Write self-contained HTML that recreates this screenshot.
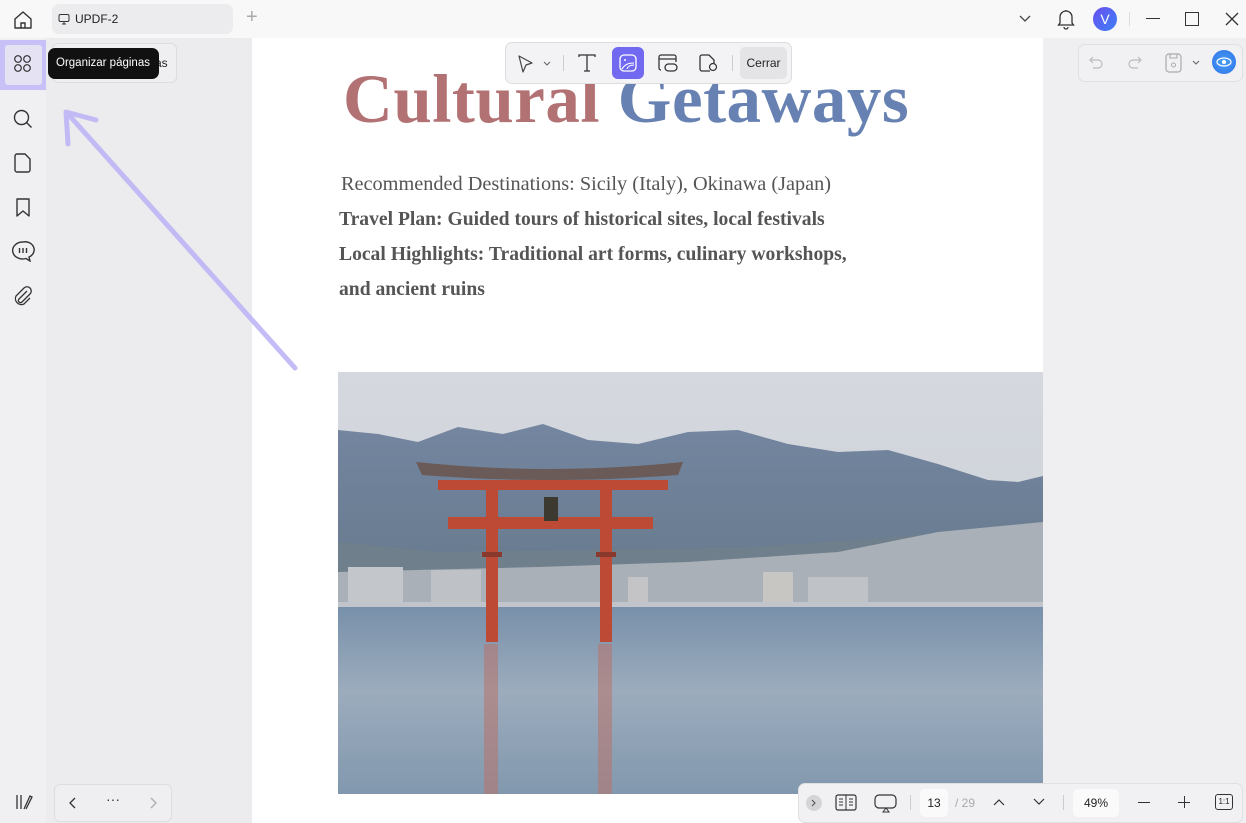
<!DOCTYPE html>
<html><head><meta charset="utf-8"><style>
*{margin:0;padding:0;box-sizing:border-box}
body{width:1246px;height:823px;overflow:hidden;background:#efeff1;font-family:"Liberation Sans",sans-serif;position:relative}
.abs{position:absolute}
svg{display:block}
</style></head><body>
<!-- top bar -->
<div class="abs" style="left:0;top:0;width:1246px;height:38px;background:#f8f8f9"></div>
<div class="abs" style="left:52px;top:4px;width:181px;height:30px;background:#ececee;border-radius:7px"></div>
<svg class="abs" style="left:58px;top:13px" width="12" height="12" viewBox="0 0 12 12"><rect x="1" y="1.5" width="10" height="7" rx="1.5" fill="none" stroke="#333" stroke-width="1"/><path d="M4 11h4M6 8.5v2.5" stroke="#333"/></svg>
<div class="abs" style="left:75px;top:12px;font-size:12px;color:#222">UPDF-2</div>
<div class="abs" style="left:246px;top:6px;font-size:20px;color:#aaa;font-weight:300">+</div>
<svg class="abs" style="left:12px;top:9px" width="22" height="22" viewBox="0 0 22 22"><path d="M3 10L11 3l8 7v9H3z" fill="none" stroke="#333" stroke-width="1.4" stroke-linejoin="round"/><path d="M9 19v-5h4v5" fill="none" stroke="#333" stroke-width="1.4"/></svg>
<svg class="abs" style="left:1018px;top:14px" width="14" height="10"><path d="M2 2l5 5 5-5" fill="none" stroke="#444" stroke-width="1.3"/></svg>
<svg class="abs" style="left:1056px;top:8px" width="20" height="22" viewBox="0 0 20 22"><path d="M4 15V9a6 6 0 0 1 12 0v6l1.5 2h-15z M10 2v1 M8 19a2 2 0 0 0 4 0" fill="none" stroke="#333" stroke-width="1.3"/></svg>
<div class="abs" style="left:1093px;top:7px;width:24px;height:24px;border-radius:50%;background:linear-gradient(135deg,#6a4df0,#3b82f6);color:#fff;font-size:14px;text-align:center;line-height:24px">V</div>
<div class="abs" style="left:1129px;top:12px;width:1px;height:14px;background:#ddd"></div>
<div class="abs" style="left:1146px;top:18px;width:14px;height:1.3px;background:#333"></div>
<div class="abs" style="left:1185px;top:12px;width:14px;height:14px;border:1.3px solid #333"></div>
<svg class="abs" style="left:1224px;top:11px" width="16" height="16"><path d="M2 2l12 12M14 2L2 14" stroke="#333" stroke-width="1.3"/></svg>

<!-- left rail -->
<div class="abs" style="left:0;top:38px;width:46px;height:785px;background:#f0f0f2"></div>
<div class="abs" style="left:0;top:40px;width:47px;height:50px;background:#c7c1f7"></div>
<div class="abs" style="left:5px;top:45px;width:37px;height:40px;background:#e4e2f3;border-radius:3px"></div>
<svg class="abs" style="left:13px;top:54px" width="20" height="20" viewBox="0 0 20 20"><g fill="none" stroke="#333" stroke-width="1.2"><circle cx="5" cy="5" r="3.3"/><circle cx="14" cy="5" r="3.3"/><circle cx="5" cy="14" r="3.3"/><circle cx="14" cy="14" r="3.3"/></g></svg>
<svg class="abs" style="left:12px;top:108px" width="22" height="22" viewBox="0 0 22 22"><circle cx="9.5" cy="9.5" r="7" fill="none" stroke="#333" stroke-width="1.4"/><path d="M14.5 14.5l5 5" stroke="#333" stroke-width="1.4"/></svg>
<svg class="abs" style="left:13px;top:152px" width="20" height="22" viewBox="0 0 20 22"><path d="M4 2h8l5 5v11a2 2 0 0 1-2 2H4a2 2 0 0 1-2-2V4a2 2 0 0 1 2-2z" fill="none" stroke="#333" stroke-width="1.4"/></svg>
<svg class="abs" style="left:14px;top:197px" width="18" height="22" viewBox="0 0 18 22"><path d="M3 2h12v17l-6-5-6 5z" fill="none" stroke="#333" stroke-width="1.4" stroke-linejoin="round"/></svg>
<svg class="abs" style="left:11px;top:240px" width="24" height="22" viewBox="0 0 24 22"><path d="M12 2a10 8.5 0 1 0 3 16.5l4 2.5-1-4A9 8 0 0 0 12 2z" fill="none" stroke="#333" stroke-width="1.4"/><path d="M8.5 8v5M12 8v5M15.5 8v5" stroke="#333" stroke-width="1.4"/></svg>
<svg class="abs" style="left:13px;top:285px" width="20" height="22" viewBox="0 0 20 22"><path d="M14 6l-8 8a2 2 0 0 0 3 3l8-8a4 4 0 0 0-6-6l-8 8a6 6 0 0 0 8 8l6-6" fill="none" stroke="#333" stroke-width="1.3"/></svg>
<svg class="abs" style="left:14px;top:792px" width="20" height="20" viewBox="0 0 20 20"><path d="M3 3v14M7 3v14M10 17l6-13 2 1-6 12" fill="none" stroke="#333" stroke-width="1.3"/></svg>

<!-- panel -->
<div class="abs" style="left:46px;top:38px;width:206px;height:785px;background:#ececee"></div>
<div class="abs" style="left:52px;top:43px;width:125px;height:40px;border:1px solid #ddd;border-radius:6px;background:#efeff1"></div>
<div class="abs" style="left:155px;top:56px;font-size:12px;color:#222">as</div>
<div class="abs" style="left:48px;top:48px;width:111px;height:31px;background:#111;border-radius:7px;color:#fff;font-size:11.5px;line-height:31px;padding-left:8px;white-space:nowrap">Organizar páginas</div>
<div class="abs" style="left:54px;top:784px;width:118px;height:38px;border:1px solid #ddd;border-radius:6px;background:#efeff1"></div>
<svg class="abs" style="left:66px;top:796px" width="14" height="14"><path d="M9 2L4 7l5 5" fill="none" stroke="#333" stroke-width="1.3"/></svg>
<div class="abs" style="left:106px;top:791px;font-size:14px;color:#333">···</div>
<svg class="abs" style="left:146px;top:796px" width="14" height="14"><path d="M5 2l5 5-5 5" fill="none" stroke="#aaa" stroke-width="1.3"/></svg>

<!-- page -->
<div class="abs" style="left:252px;top:38px;width:791px;height:785px;background:#fff"></div>
<div class="abs" style="left:343px;top:60px;font-family:'Liberation Serif',serif;font-weight:bold;font-size:69px;letter-spacing:0.5px;white-space:nowrap"><span style="color:#b27172">Cultural</span> <span style="color:#6782b2">Getaways</span></div>
<div class="abs" style="left:341px;top:173px;font-family:'Liberation Serif',serif;font-size:20.3px;color:#555;white-space:nowrap">Recommended Destinations: Sicily (Italy), Okinawa (Japan)</div>
<div class="abs" style="left:339px;top:202px;font-family:'Liberation Serif',serif;font-size:19.6px;font-weight:bold;color:#555;line-height:35px;white-space:nowrap">Travel Plan: Guided tours of historical sites, local festivals<br>Local Highlights: Traditional art forms, culinary workshops,<br>and ancient ruins</div>

<!-- photo -->
<svg class="abs" style="left:338px;top:372px" width="705" height="422" viewBox="0 0 705 422">
<defs>
<linearGradient id="sky" x1="0" y1="0" x2="0" y2="1"><stop offset="0" stop-color="#d5d8de"/><stop offset="1" stop-color="#c5ccd6"/></linearGradient>
<linearGradient id="mt" x1="0" y1="0" x2="0" y2="1"><stop offset="0" stop-color="#7486a0"/><stop offset="1" stop-color="#66788a"/></linearGradient>
<linearGradient id="wt" x1="0" y1="0" x2="0" y2="1"><stop offset="0" stop-color="#7890aa"/><stop offset="0.45" stop-color="#9cacbd"/><stop offset="1" stop-color="#8298ae"/></linearGradient>
</defs>
<rect width="705" height="422" fill="url(#sky)"/>
<path d="M0 58 L40 62 L80 70 L120 55 L165 62 L205 52 L250 68 L300 72 L350 60 L400 58 L450 72 L500 80 L550 78 L600 92 L650 108 L680 110 L705 104 L705 235 L0 235z" fill="url(#mt)"/>
<path d="M0 170 L100 180 L250 178 L400 176 L520 168 L620 160 L705 155 L705 235 L0 235z" fill="#6f7f8b"/>
<path d="M0 200 L200 195 L350 190 L500 180 L600 160 L705 150 L705 232 L0 232z" fill="#a9b0b8"/>
<rect x="10" y="195" width="55" height="38" fill="#c3c6ca"/>
<rect x="93" y="198" width="50" height="35" fill="#bec1c6"/>
<rect x="425" y="200" width="30" height="33" fill="#c8c6c2"/>
<rect x="290" y="205" width="20" height="28" fill="#c4c4c6"/>
<rect x="470" y="205" width="60" height="28" fill="#bfc3c8"/>
<rect x="0" y="230" width="705" height="5" fill="#c1c5cb"/>
<rect x="0" y="235" width="705" height="187" fill="url(#wt)"/>
<g fill="#bd4a34">
<path d="M78 90 Q210 104 345 90 L340 103 Q210 113 84 103z" fill="#6a5a58"/>
<rect x="100" y="108" width="230" height="10"/>
<rect x="110" y="145" width="205" height="12"/>
<rect x="148" y="118" width="12" height="152"/>
<rect x="262" y="118" width="12" height="152"/>
<rect x="144" y="180" width="20" height="5" fill="#8a3a2c"/>
<rect x="258" y="180" width="20" height="5" fill="#8a3a2c"/>
<rect x="206" y="125" width="14" height="24" fill="#3c3a30"/>
</g>
<g fill="#b8736a" opacity="0.55"><rect x="146" y="272" width="14" height="150"/><rect x="260" y="272" width="14" height="150"/></g>
</svg>

<!-- arrow -->
<svg class="abs" style="left:50px;top:100px" width="260" height="280"><g stroke="#bdb5f5" stroke-width="5" fill="none" stroke-linecap="round" opacity="0.9"><path d="M245 268 L18 14"/><path d="M16 12 L18 44 M16 12 L46 20"/></g></svg>

<!-- floating toolbar -->
<div class="abs" style="left:505px;top:42px;width:287px;height:42px;background:#f3f3f5;border:1px solid #ddd;border-radius:7px"></div>
<svg class="abs" style="left:516px;top:54px" width="40" height="20"><path d="M3 2l13 7-6 2-3 7z" fill="none" stroke="#444" stroke-width="1.2" stroke-linejoin="round"/><path d="M28 8l3 3 3-3" fill="none" stroke="#666" stroke-width="1.1"/></svg>
<div class="abs" style="left:563px;top:55px;width:1px;height:16px;background:#ccc"></div>
<svg class="abs" style="left:577px;top:53px" width="20" height="20"><path d="M2 4V2h16v2M10 2v16M7 18h6" fill="none" stroke="#333" stroke-width="1.3"/></svg>
<div class="abs" style="left:612px;top:47px;width:32px;height:32px;background:#7169f0;border-radius:6px"></div>
<svg class="abs" style="left:619px;top:54px" width="18" height="18"><rect x="1" y="1" width="16" height="16" rx="4" fill="none" stroke="#fff" stroke-width="1.3"/><path d="M3 15c3-5 7-6 12-6M8 15c1-3 3-4 7-4" fill="none" stroke="#fff" stroke-width="1.1"/><circle cx="6" cy="6" r="1" fill="#fff"/></svg>
<svg class="abs" style="left:657px;top:53px" width="22" height="20"><path d="M4 17a2 2 0 0 1-2-2V4a2 2 0 0 1 2-2h13a2 2 0 0 1 2 2v5M2 6h17" fill="none" stroke="#333" stroke-width="1.3"/><rect x="8" y="11" width="12" height="7" rx="3.5" fill="none" stroke="#333" stroke-width="1.3"/></svg>
<svg class="abs" style="left:698px;top:53px" width="22" height="20"><path d="M12 18H4a2 2 0 0 1-2-2V4a2 2 0 0 1 2-2h7l5 5v3" fill="none" stroke="#333" stroke-width="1.3"/><circle cx="15" cy="14" r="3.5" fill="none" stroke="#333" stroke-width="1.2"/></svg>
<div class="abs" style="left:732px;top:55px;width:1px;height:16px;background:#ccc"></div>
<div class="abs" style="left:740px;top:47px;width:47px;height:32px;background:#e4e4e6;border-radius:5px;font-size:12px;color:#222;line-height:32px;text-align:center">Cerrar</div>

<!-- right top toolbar -->
<div class="abs" style="left:1078px;top:44px;width:165px;height:38px;background:#f1f1f3;border:1px solid #e0e0e2;border-radius:7px"></div>
<svg class="abs" style="left:1088px;top:54px" width="60" height="18"><path d="M5 3L2 6l3 3M2 6h8a4 4 0 0 1 0 8H5" fill="none" stroke="#bbb" stroke-width="1.2"/><path d="M50 3l3 3-3 3M53 6h-8a4 4 0 0 0 0 8h5" fill="none" stroke="#bbb" stroke-width="1.2"/></svg>
<svg class="abs" style="left:1164px;top:53px" width="40" height="20"><rect x="2" y="1" width="15" height="18" rx="3" fill="none" stroke="#aaa" stroke-width="1.2"/><path d="M6 1v4h7V1" fill="none" stroke="#aaa" stroke-width="1.1"/><circle cx="9.5" cy="12" r="2" fill="none" stroke="#aaa"/><path d="M29 8l3 3 3-3" fill="none" stroke="#666" stroke-width="1.1"/></svg>
<div class="abs" style="left:1212px;top:50px;width:24px;height:24px;border-radius:50%;background:radial-gradient(circle,#4aa0f5,#2d6fe8)"></div>
<svg class="abs" style="left:1215px;top:53px" width="18" height="18"><ellipse cx="9" cy="9" rx="7" ry="4" fill="none" stroke="#fff" stroke-width="1.2"/><circle cx="9" cy="9" r="2" fill="#fff"/></svg>

<!-- bottom right toolbar -->
<div class="abs" style="left:798px;top:783px;width:445px;height:40px;background:#f1f1f3;border:1px solid #e0e0e2;border-radius:7px"></div>
<div class="abs" style="left:806px;top:795px;width:16px;height:16px;border-radius:50%;background:#d5d5d8"></div>
<svg class="abs" style="left:810px;top:799px" width="8" height="8"><path d="M2 1l3 3-3 3" fill="none" stroke="#555" stroke-width="1.1"/></svg>
<svg class="abs" style="left:835px;top:794px" width="22" height="17"><rect x="1" y="1" width="20" height="15" rx="2" fill="none" stroke="#333" stroke-width="1.2"/><path d="M11 1v15M4 5h4M4 8h4M4 11h4M14 5h4M14 8h4M14 11h4" stroke="#333"/></svg>
<svg class="abs" style="left:874px;top:794px" width="24" height="19"><rect x="1" y="1" width="21" height="13" rx="4" fill="none" stroke="#333" stroke-width="1.2"/><path d="M9 18l3-4 3 4z" fill="none" stroke="#333"/></svg>
<div class="abs" style="left:910px;top:795px;width:1px;height:15px;background:#ccc"></div>
<div class="abs" style="left:920px;top:789px;width:28px;height:28px;background:#fafafa;border-radius:5px;font-size:12px;text-align:center;line-height:28px;color:#222">13</div>
<div class="abs" style="left:955px;top:796px;font-size:12px;color:#aaa">/ 29</div>
<svg class="abs" style="left:992px;top:797px" width="14" height="10"><path d="M2 8l5-5 5 5" fill="none" stroke="#333" stroke-width="1.2"/></svg>
<svg class="abs" style="left:1032px;top:797px" width="14" height="10"><path d="M2 2l5 5 5-5" fill="none" stroke="#333" stroke-width="1.2"/></svg>
<div class="abs" style="left:1063px;top:795px;width:1px;height:15px;background:#ccc"></div>
<div class="abs" style="left:1073px;top:789px;width:46px;height:28px;background:#fafafa;border-radius:5px;font-size:12px;text-align:center;line-height:28px;color:#222">49%</div>
<div class="abs" style="left:1138px;top:802px;width:12px;height:1.3px;background:#333"></div>
<div class="abs" style="left:1178px;top:802px;width:12px;height:1.3px;background:#333"></div>
<div class="abs" style="left:1183.5px;top:796px;width:1.3px;height:12px;background:#333"></div>
<div class="abs" style="left:1215px;top:794px;width:18px;height:16px;border:1.2px solid #333;border-radius:3px;font-size:8px;text-align:center;line-height:14px;color:#222">1:1</div>
</body></html>
